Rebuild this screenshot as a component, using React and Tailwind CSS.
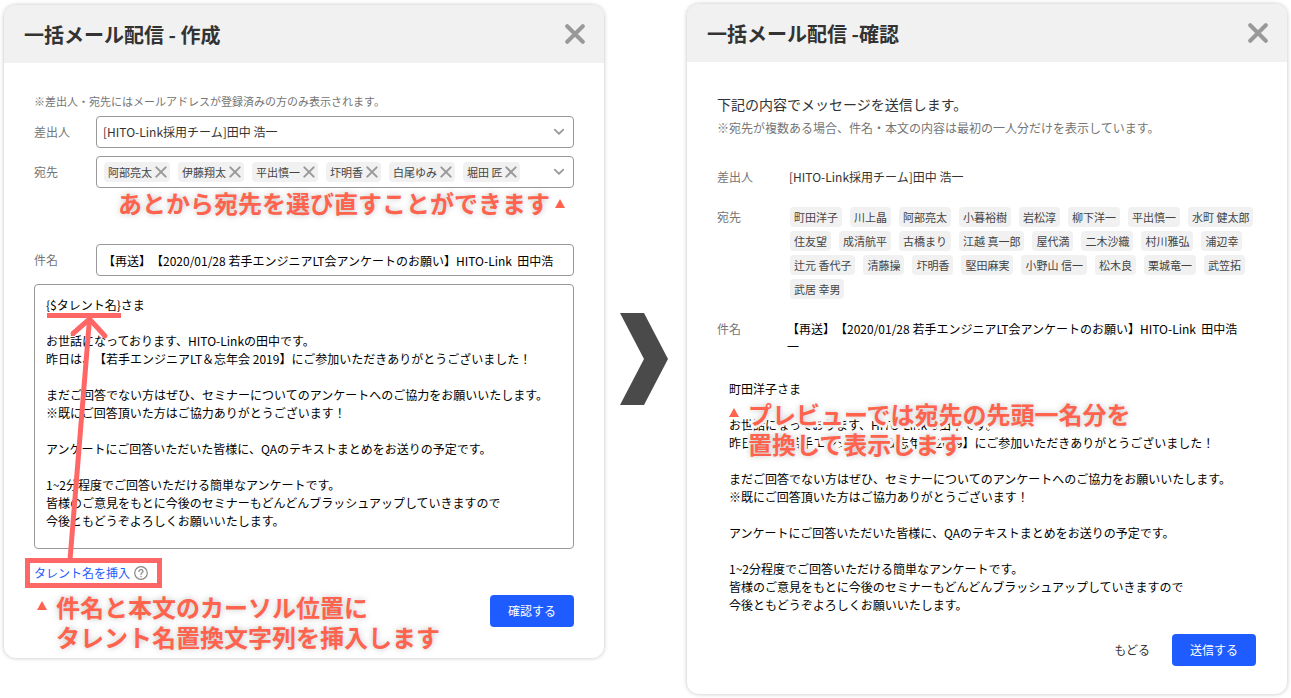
import React from "react";

const selected = ["阿部亮太", "伊藤翔太", "平出慎一", "圷明香", "白尾ゆみ", "堀田 匠"];

const recipients = [
  "町田洋子", "川上晶", "阿部亮太", "小暮裕樹", "岩松淳", "柳下洋一", "平出慎一", "水町 健太郎",
  "住友望", "成清航平", "古橋まり", "江越 真一郎", "屋代満", "二木沙織", "村川雅弘", "浦辺幸",
  "辻元 香代子", "清藤操", "圷明香", "堅田麻実", "小野山 信一", "松木良", "栗城竜一", "武笠拓",
  "武居 幸男",
];

const subject = "【再送】【2020/01/28 若手エンジニアLT会アンケートのお願い】HITO-Link  田中浩一";

const message = `さま

お世話になっております、HITO-Linkの田中です。
昨日は、【若手エンジニアLT＆忘年会 2019】にご参加いただきありがとうございました！

まだご回答でない方はぜひ、セミナーについてのアンケートへのご協力をお願いいたします。
※既にご回答頂いた方はご協力ありがとうございます！

アンケートにご回答いただいた皆様に、QAのテキストまとめをお送りの予定です。

1~2分程度でご回答いただける簡単なアンケートです。
皆様のご意見をもとに今後のセミナーもどんどんブラッシュアップしていきますので
今後ともどうぞよろしくお願いいたします。`;

function Cross({ className, width }) {
  return (
    <svg viewBox="0 0 18 18" className={className} fill="none" stroke="#999" strokeWidth={width} strokeLinecap="round" aria-hidden="true">
      <path d="M2 2 L16 16 M16 2 L2 16" />
    </svg>
  );
}

function Chevron() {
  return (
    <svg viewBox="0 0 12 8" className="h-2 w-3" fill="none" stroke="#999" strokeWidth="1.8" strokeLinecap="round" strokeLinejoin="round" aria-hidden="true">
      <path d="M1.8 1.6 L6 5.8 L10.2 1.6" />
    </svg>
  );
}

function Triangle() {
  return (
    <svg viewBox="0 0 10 9" className="h-[9px] w-[10px] shrink-0" aria-hidden="true">
      <path d="M5 0 L10 9 H0 Z" fill="#ff624d" />
    </svg>
  );
}

function Card({ title, className, children }) {
  return (
    <section className={`relative rounded-xl bg-white shadow-[0_0_4px_rgba(0,0,0,0.25)] ${className ?? ""}`}>
      <header className="flex h-[58px] items-center justify-between rounded-t-xl bg-[#f1f1f1] pr-[19px] pl-5">
        <h1 className="pt-0.5 text-xl leading-7 font-bold whitespace-pre text-[#333]">{title}</h1>
        <button type="button" aria-label="閉じる">
          <Cross className="size-5" width="3.6" />
        </button>
      </header>
      {children}
    </section>
  );
}

function Note({ className, children }) {
  return (
    <p className={`pointer-events-none absolute text-2xl leading-[30px] font-bold whitespace-nowrap text-[#ff624d] [-webkit-text-stroke:5px_white] [paint-order:stroke_fill] [text-shadow:0_0_6px_rgba(0,0,0,0.25)] ${className}`}>
      {children}
    </p>
  );
}

function ComposeCard() {
  return (
    <Card title="一括メール配信 - 作成" className="mt-px">
      <form className="px-[30px] pt-[29px] pb-[31px]" onSubmit={(e) => e.preventDefault()}>
        <p className="mb-1.5 text-[11px] leading-[18px] text-[#757575]">
          ※差出人・宛先にはメールアドレスが登録済みの方のみ表示されます。
        </p>
        <div className="flex items-center">
          <label htmlFor="from" className="w-[62px] shrink-0 text-[#757575]">差出人</label>
          <div className="relative flex-1">
            <select id="from" className="h-8 w-full appearance-none rounded border border-[#999] bg-white pr-8 pl-1.5 text-[#333]">
              <option>[HITO-Link採用チーム]田中 浩一</option>
            </select>
            <span className="pointer-events-none absolute inset-y-0 right-[9px] flex items-center"><Chevron /></span>
          </div>
        </div>
        <div className="mt-2 flex items-center">
          <span id="to-label" className="w-[62px] shrink-0 text-[#757575]">宛先</span>
          <div role="group" aria-labelledby="to-label" className="flex min-h-8 flex-1 items-center justify-between rounded border border-[#999] pr-2 pl-[7px]">
            <ul className="flex flex-wrap gap-x-2 gap-y-1">
              {selected.map((name) => (
                <li key={name} className="flex h-5 items-center gap-[3px] rounded bg-[#f1f1f1] pr-[3px] pl-1 text-[11px] whitespace-nowrap text-[#444]">
                  {name}
                  <button type="button" aria-label={`${name}を削除`}>
                    <Cross className="size-3" width="3" />
                  </button>
                </li>
              ))}
            </ul>
            <button type="button" aria-label="宛先を開く"><Chevron /></button>
          </div>
        </div>
        <div className="mt-14 flex items-center">
          <label htmlFor="subject" className="w-[62px] shrink-0 text-[#757575]">件名</label>
          <input id="subject" defaultValue={subject} className="h-8 w-full min-w-0 flex-1 rounded border border-[#999] pr-5 pl-1.5 text-black" />
        </div>
        <textarea
          aria-label="本文"
          defaultValue={`{$タレント名}${message}`}
          className="mt-2 block h-[265px] w-full resize-none rounded border border-[#999] px-[11px] py-[11px] leading-[18px] text-black"
        />
        <div className="relative mt-[15px] inline-flex items-center gap-1 align-top">
          <button type="button" className="leading-[18px] text-[#1f5cff]">タレント名を挿入</button>
          <svg viewBox="0 0 14 14" className="size-[14px]" fill="none" stroke="#888" strokeWidth="1.2" strokeLinecap="round" aria-hidden="true">
            <circle cx="7" cy="7" r="6.3" />
            <path d="M5 5.5 C5 2.9 9 2.9 9 5.4 C9 6.8 7 6.9 7 8.4" />
            <path d="M7 10.4 V10.5" strokeWidth="1.4" />
          </svg>
          <span className="pointer-events-none absolute -top-1.5 -right-[14px] -bottom-1.5 -left-[9px] border-5 border-[#ff6666]" />
        </div>
        <div className="mt-[13px] flex justify-end">
          <button type="submit" className="h-8 w-[84px] rounded bg-[#1f5cff] text-white">確認する</button>
        </div>
      </form>

      <svg viewBox="0 0 100 250" className="pointer-events-none absolute top-[308px] left-[21px] h-[250px] w-[100px]" fill="none" stroke="#ff6666" strokeWidth="5" aria-hidden="true">
        <path d="M22 2.5 H96" />
        <path d="M45 247 L64.5 6" />
        <path d="M48 20.5 L64.5 6 L80 23" strokeLinecap="round" />
      </svg>
      <Note className="top-[183px] left-[114px] flex items-center gap-[5px]">
        あとから宛先を選び直すことができます
        <Triangle />
      </Note>
      <Note className="top-[587px] left-[33px] flex gap-[9px]">
        <span className="mt-[9px]"><span className="flex h-[9px]"><Triangle /></span></span>
        <span>件名と本文のカーソル位置に<br />タレント名置換文字列を挿入します</span>
      </Note>
    </Card>
  );
}

function ConfirmCard() {
  return (
    <Card title="一括メール配信 -確認">
      <div className="px-[30px] pt-8 pb-7">
        <p className="text-sm leading-5 text-[#333]">下記の内容でメッセージを送信します。</p>
        <p className="mt-1 leading-5 text-[#757575]">
          ※宛先が複数ある場合、件名・本文の内容は最初の一人分だけを表示しています。
        </p>
        <dl className="mt-[30px] grid grid-cols-[70px_1fr] leading-[18px]">
          <dt className="text-[#757575]">差出人</dt>
          <dd className="pl-0.5 text-[#333]">[HITO-Link採用チーム]田中 浩一</dd>
          <dt className="mt-[22px] text-[#757575]">宛先</dt>
          <dd className="mt-[21px] pl-[3px]">
            <ul className="flex flex-wrap gap-x-2 gap-y-1">
              {recipients.map((name) => (
                <li key={name} className="flex h-5 items-center rounded bg-[#f1f1f1] px-1 text-[11px] whitespace-nowrap text-[#444]">{name}</li>
              ))}
            </ul>
          </dd>
          <dt className="mt-[21px] text-[#757575]">件名</dt>
          <dd className="mt-[21px] pr-[15px] whitespace-pre-wrap text-black">{subject}</dd>
        </dl>
        <div className="relative mt-6 pl-3">
          <p className="leading-[18px] whitespace-pre-wrap text-black">{`町田洋子${message}`}</p>
          <Note className="top-[19px] left-3 flex gap-[9px]">
            <span className="mt-[9px]"><span className="flex h-[9px]"><Triangle /></span></span>
            <span>プレビューでは宛先の先頭一名分を<br />置換して表示します</span>
          </Note>
        </div>
        <div className="mt-5 flex items-center justify-end gap-[22px] pr-px">
          <button type="button" className="text-[#333]">もどる</button>
          <button type="button" className="h-8 w-[84px] rounded bg-[#1f5cff] text-white">送信する</button>
        </div>
      </div>
    </Card>
  );
}

export default function App() {
  return (
    <main className="grid grid-cols-[1fr_83px_1fr] items-start bg-white p-1 font-['Noto_Sans_CJK_JP',sans-serif] text-xs [&_*]:[text-spacing-trim:space-all]">
      <ComposeCard />
      <svg viewBox="0 0 48 92" className="mt-[309px] ml-4 h-[92px] w-12" aria-hidden="true">
        <path d="M0 0 H24 L48 46 L24 92 H0 L24 46 Z" fill="#4a4a4a" />
      </svg>
      <ConfirmCard />
    </main>
  );
}
